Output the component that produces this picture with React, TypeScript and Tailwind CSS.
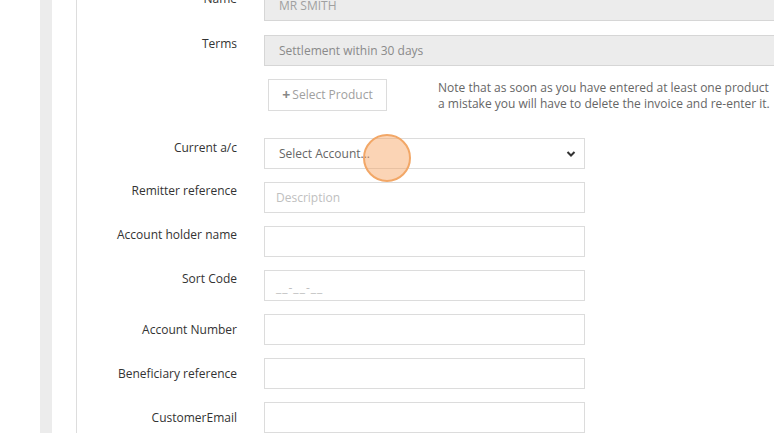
import React from "react";

const font = { fontFamily: '"Open Sans", "Noto Sans", sans-serif' };

function Row({
  label,
  offset,
  children,
}: {
  label: string;
  offset: string;
  children: React.ReactNode;
}) {
  return (
    <div className="flex items-start">
      <div className={`w-[160px] shrink-0 text-right text-[12px] leading-[18px] text-[#333] ${offset}`}>{label}</div>
      <div className="ml-[27px]">{children}</div>
    </div>
  );
}

const box =
  "h-[31px] w-[321px] border border-[#dcdcdc] bg-white flex items-center text-[12px]";

export default function App() {
  return (
    <div className="relative flex h-[433px] w-[774px] overflow-hidden bg-white" style={font}>
      <div className="w-[40px] shrink-0 bg-white" />
      <div className="w-[12px] shrink-0 bg-[#ececec]" />
      <div className="w-[24px] shrink-0 bg-white" />
      <div className="flex-1 border-l border-[#dddddd]">
        <div className="mt-[-10px] flex flex-col">
          <Row label="Name" offset="pt-[0px]">
            <div className="flex h-[31px] w-[560px] items-center border border-[#d6d6d6] bg-[#ececec] pl-[14px] text-[12px] text-[#a0a0a0]">
              MR SMITH
            </div>
          </Row>
          <div className="mt-[14px]">
            <Row label="Terms" offset="pt-[0px]">
              <div className="flex h-[31px] w-[560px] items-center border border-[#d6d6d6] bg-[#ececec] pl-[14px] text-[12px] text-[#8a8a8a]">
                Settlement within 30 days
              </div>
            </Row>
          </div>
          <div className="mt-[13px] flex">
            <div className="w-[160px] shrink-0" />
            <div className="ml-[31px] flex h-[32px] w-[119px] items-center justify-center border border-[#dcdcdc] text-[12px] text-[#a0a0a0]">
              <span className="mr-[2px] text-[14px] font-bold leading-none text-[#888]">+</span>Select Product
            </div>
            <div className="ml-[51px] mt-[1px] whitespace-nowrap text-[12px] leading-[16px] text-[#666]">
              Note that as soon as you have entered at least one product
              <br />a mistake you will have to delete the invoice and re-enter it.
            </div>
          </div>
          <div className="mt-[26px] flex flex-col gap-[13px]">
            <Row label="Current a/c" offset="pt-[1px]">
              <div className={`${box} justify-between pl-[14px] pr-[8px] text-[#666]`}>
                <span>Select Account...</span>
                <svg width="10" height="8" viewBox="0 0 10 8">
                  <path d="M1.5 2 L5 5.5 L8.5 2" fill="none" stroke="#333" strokeWidth="2" />
                </svg>
              </div>
            </Row>
            <Row label="Remitter reference" offset="pt-0">
              <div className={`${box} pl-[11px] text-[#c0c0c0]`}>Description</div>
            </Row>
            <Row label="Account holder name" offset="pt-0">
              <div className={box} />
            </Row>
            <Row label="Sort Code" offset="pt-0">
              <div className={`${box} pl-[11px] pt-[4px] tracking-[1px] text-[#c0c0c0]`}>__-__-__</div>
            </Row>
            <Row label="Account Number" offset="pt-[7px]">
              <div className={box} />
            </Row>
            <Row label="Beneficiary reference" offset="pt-[7px]">
              <div className={box} />
            </Row>
            <Row label="CustomerEmail" offset="pt-[7px]">
              <div className={box} />
            </Row>
          </div>
        </div>
      </div>
      <div className="absolute left-[363px] top-[134px] h-[48px] w-[48px] rounded-full border-2 border-[#f2a767] bg-[rgba(247,160,90,0.45)]" />
    </div>
  );
}
